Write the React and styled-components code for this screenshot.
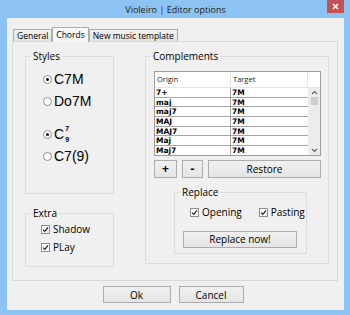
import React from "react";
import styled, { createGlobalStyle, css } from "styled-components";

const GlobalStyle = createGlobalStyle`
  html, body { margin: 0; padding: 0; }
  body {
    width: 350px;
    height: 315px;
    overflow: hidden;
    font-family: "Open Sans", "Noto Sans", sans-serif;
    color: #000;
  }
  * { box-sizing: border-box; }
`;

const Window = styled.div`
  width: 350px;
  height: 315px;
  background: #8cc3f3;
  display: flex;
  flex-direction: column;
  padding: 0 6px 5px 7px;
`;

const TitleBar = styled.div`
  height: 18px;
  display: grid;
  grid-template-columns: 1fr auto 1fr;
  align-items: start;
`;

const Title = styled.div`
  font-size: 9px;
  line-height: 19px;
  color: #1b1b1b;
  white-space: nowrap;
`;

const CloseButton = styled.div`
  justify-self: end;
  width: 17px;
  height: 13px;
  background: #c75050;
  display: flex;
  align-items: center;
  justify-content: center;
`;

const Client = styled.div`
  flex: 1;
  background: #f0f0f0;
  display: flex;
  flex-direction: column;
  padding: 9px 6px 0 5px;
`;

const TabStrip = styled.div`
  display: flex;
  align-items: flex-end;
  height: 15px;
  padding-left: 1px;
  margin-bottom: -1px;
  position: relative;
  z-index: 1;
`;

const Tab = styled.div`
  height: 12px;
  margin-bottom: 1px;
  padding: 0 3px;
  border: 1px solid #acacac;
  border-bottom: none;
  background: linear-gradient(#f2f2f2, #e4e4e4);
  font-size: 8.5px;
  line-height: 11px;
  white-space: nowrap;
  ${(p) =>
    p.$active &&
    css`
      height: 15px;
      margin-bottom: 0;
      background: #f7f7f7;
      line-height: 13px;
    `}
`;

const Panel = styled.div`
  height: 240px;
  border: 1px solid #d9d9d9;
  background: #f0f0f0;
  display: grid;
  grid-template-columns: 89px 184px;
  column-gap: 31px;
  align-items: start;
  padding: 8px 0 0 12px;
`;

const Column = styled.div`
  display: flex;
  flex-direction: column;
  gap: 13px;
`;

const Group = styled.fieldset`
  margin: 0;
  padding: 0;
  min-width: 0;
  border: 1px solid #dcdcdc;
  height: ${(p) => p.$height}px;
`;

const Legend = styled.legend`
  margin-left: 5px;
  padding: 0 2px;
  font-size: 10px;
  line-height: 12px;
`;

const StylesBody = styled.div`
  padding: 6px 0 0 17px;
  display: flex;
  flex-direction: column;
  gap: 11px;
`;

const RadioGroup = styled.div`
  display: flex;
  flex-direction: column;
`;

const RadioRow = styled.div`
  height: 22px;
  display: flex;
  align-items: center;
  gap: 2px;
  font-family: "Liberation Sans", Arial, sans-serif;
  font-size: 14px;
`;

const RadioCircle = styled.span`
  width: 9px;
  height: 9px;
  border-radius: 50%;
  border: 1px solid #8e8e8e;
  background: #fff;
  display: flex;
  align-items: center;
  justify-content: center;
  flex: none;
  &::after {
    content: "";
    width: 3px;
    height: 3px;
    border-radius: 50%;
    background: ${(p) => (p.$checked ? "#111" : "transparent")};
  }
`;

const Chord = styled.span`
  display: inline-flex;
  align-items: center;
`;

const ChordStack = styled.span`
  display: inline-flex;
  flex-direction: column;
  align-items: center;
  gap: 3px;
  margin-left: 1px;
  font-size: 7px;
  line-height: 8px;
  font-weight: bold;
`;

const ExtraBody = styled.div`
  padding: 1px 0 0 15px;
  display: flex;
  flex-direction: column;
`;

const CheckRow = styled.label`
  height: 18px;
  display: flex;
  align-items: center;
  gap: 3px;
  font-size: 10px;
`;

const CheckBoxBox = styled.span`
  width: 9px;
  height: 9px;
  border: 1px solid #8e8e8e;
  background: #fff;
  display: flex;
  align-items: center;
  justify-content: center;
  flex: none;
`;

const RightBody = styled.div`
  padding: 9px 7px 0 8px;
  display: flex;
  flex-direction: column;
`;

const ListView = styled.div`
  height: 85px;
  border: 1px solid #9d9d9d;
  background: #fff;
  overflow: hidden;
  display: flex;
  flex-direction: column;
`;

const HeaderRow = styled.div`
  height: 16px;
  flex: none;
  display: grid;
  grid-template-columns: 76px 77px 1fr;
  border-bottom: 1px solid #e5e5e5;
`;

const HeaderCell = styled.div`
  font-size: 7.5px;
  line-height: 15px;
  padding-left: 2px;
  color: #222;
  border-right: 1px solid #e5e5e5;
`;

const ListBody = styled.div`
  flex: 1;
  display: flex;
  min-height: 0;
`;

const Rows = styled.div`
  width: 153px;
  display: grid;
  grid-template-columns: 76px 77px;
  grid-auto-rows: 9.67px;
  align-content: start;
`;

const Cell = styled.div`
  font-family: "DejaVu Sans", Verdana, sans-serif;
  font-weight: bold;
  font-size: 7.5px;
  line-height: 9.5px;
  padding-left: 1px;
  border-bottom: 1px solid #a5a5a5;
  ${(p) => p.$first && css`border-right: 1px solid #a5a5a5;`}
  overflow: hidden;
  white-space: nowrap;
`;

const ScrollBar = styled.div`
  flex: 1;
  background: #ececec;
  display: flex;
  flex-direction: column;
  align-items: center;
  padding: 2px 0 2px;
`;

const ScrollThumb = styled.div`
  width: 7px;
  height: 8px;
  background: #cdcdcd;
  margin-top: 2px;
`;

const ScrollSpacer = styled.div`
  flex: 1;
`;

const ButtonRow = styled.div`
  margin-top: 4px;
  display: flex;
  gap: 5px;
`;

const Button = styled.button`
  height: ${(p) => p.$h || 18}px;
  width: ${(p) => (p.$w ? `${p.$w}px` : "auto")};
  flex: ${(p) => (p.$grow ? 1 : "none")};
  margin: 0;
  padding: 0;
  border: 1px solid #acacac;
  border-radius: 0;
  background: linear-gradient(#f0f0f0, #e5e5e5);
  font-family: "Open Sans", "Noto Sans", sans-serif;
  font-size: ${(p) => p.$fs || 10}px;
  font-weight: ${(p) => (p.$bold ? "bold" : "normal")};
  color: #000;
  line-height: 1;
`;

const ReplaceGroupWrap = styled.div`
  margin: 8px 14px 0 20px;
`;

const ReplaceBody = styled.div`
  padding: 5px 0 0 8px;
  display: flex;
  flex-direction: column;
`;

const ReplaceChecks = styled.div`
  display: flex;
  gap: 17px;
  padding-left: 7px;
`;

const ReplaceButtonWrap = styled.div`
  margin-top: 5px;
`;

const Footer = styled.div`
  flex: 1;
  display: flex;
  justify-content: center;
  align-items: flex-start;
  gap: 8px;
  padding: 5px 4px 0 0;
`;

const CheckMark = () => (
  <svg width="7" height="7" viewBox="0 0 7 7">
    <path d="M1 3.6 L2.8 5.4 L6 1.4" fill="none" stroke="#222" strokeWidth="1.3" />
  </svg>
);

const CheckBox = ({ children }) => (
  <CheckRow>
    <CheckBoxBox>
      <CheckMark />
    </CheckBoxBox>
    {children}
  </CheckRow>
);

const Radio = ({ checked, children }) => (
  <RadioRow>
    <RadioCircle $checked={checked} />
    {children}
  </RadioRow>
);

const Chevron = ({ up }) => (
  <svg width="7" height="5" viewBox="0 0 7 5">
    <path
      d={up ? "M1 4 L3.5 1.5 L6 4" : "M1 1 L3.5 3.5 L6 1"}
      fill="none"
      stroke="#606060"
      strokeWidth="1.1"
    />
  </svg>
);

const rows = [
  ["7+", "7M"],
  ["maj", "7M"],
  ["maj7", "7M"],
  ["MAJ", "7M"],
  ["MAJ7", "7M"],
  ["Maj", "7M"],
  ["Maj7", "7M"],
];

export default function App() {
  return (
    <>
      <GlobalStyle />
      <Window>
        <TitleBar>
          <span />
          <Title>Violeiro | Editor options</Title>
          <CloseButton>
            <svg width="7" height="7" viewBox="0 0 7 7">
              <path d="M1 1 L6 6 M6 1 L1 6" stroke="#fff" strokeWidth="1.6" />
            </svg>
          </CloseButton>
        </TitleBar>
        <Client>
          <TabStrip>
            <Tab>General</Tab>
            <Tab $active>Chords</Tab>
            <Tab>New music template</Tab>
          </TabStrip>
          <Panel>
            <Column>
              <Group $height={144}>
                <Legend>Styles</Legend>
                <StylesBody>
                  <RadioGroup>
                    <Radio checked>C7M</Radio>
                    <Radio>Do7M</Radio>
                  </RadioGroup>
                  <RadioGroup>
                    <Radio checked>
                      <Chord>
                        C
                        <ChordStack>
                          <span>7</span>
                          <span>9</span>
                        </ChordStack>
                      </Chord>
                    </Radio>
                    <Radio>C7(9)</Radio>
                  </RadioGroup>
                </StylesBody>
              </Group>
              <Group $height={60}>
                <Legend>Extra</Legend>
                <ExtraBody>
                  <CheckBox>Shadow</CheckBox>
                  <CheckBox>PLay</CheckBox>
                </ExtraBody>
              </Group>
            </Column>
            <Group $height={214}>
              <Legend>Complements</Legend>
              <RightBody>
                <ListView>
                  <HeaderRow>
                    <HeaderCell>Origin</HeaderCell>
                    <HeaderCell>Target</HeaderCell>
                    <span />
                  </HeaderRow>
                  <ListBody>
                    <Rows>
                      {rows.map(([a, b]) => (
                        <React.Fragment key={a}>
                          <Cell $first>{a}</Cell>
                          <Cell>{b}</Cell>
                        </React.Fragment>
                      ))}
                    </Rows>
                    <ScrollBar>
                      <Chevron up />
                      <ScrollThumb />
                      <ScrollSpacer />
                      <Chevron />
                    </ScrollBar>
                  </ListBody>
                </ListView>
                <ButtonRow>
                  <Button $w={23} $bold $fs={12}>+</Button>
                  <Button $w={21} $bold $fs={12}>-</Button>
                  <Button $grow>Restore</Button>
                </ButtonRow>
                <ReplaceGroupWrap>
                  <Group $height={68}>
                    <Legend>Replace</Legend>
                    <ReplaceBody>
                      <ReplaceChecks>
                        <CheckBox>Opening</CheckBox>
                        <CheckBox>Pasting</CheckBox>
                      </ReplaceChecks>
                      <ReplaceButtonWrap>
                        <Button $w={114} $h={17}>Replace now!</Button>
                      </ReplaceButtonWrap>
                    </ReplaceBody>
                  </Group>
                </ReplaceGroupWrap>
              </RightBody>
            </Group>
          </Panel>
          <Footer>
            <Button $w={68} $h={17}>Ok</Button>
            <Button $w={65} $h={17}>Cancel</Button>
          </Footer>
        </Client>
      </Window>
    </>
  );
}
